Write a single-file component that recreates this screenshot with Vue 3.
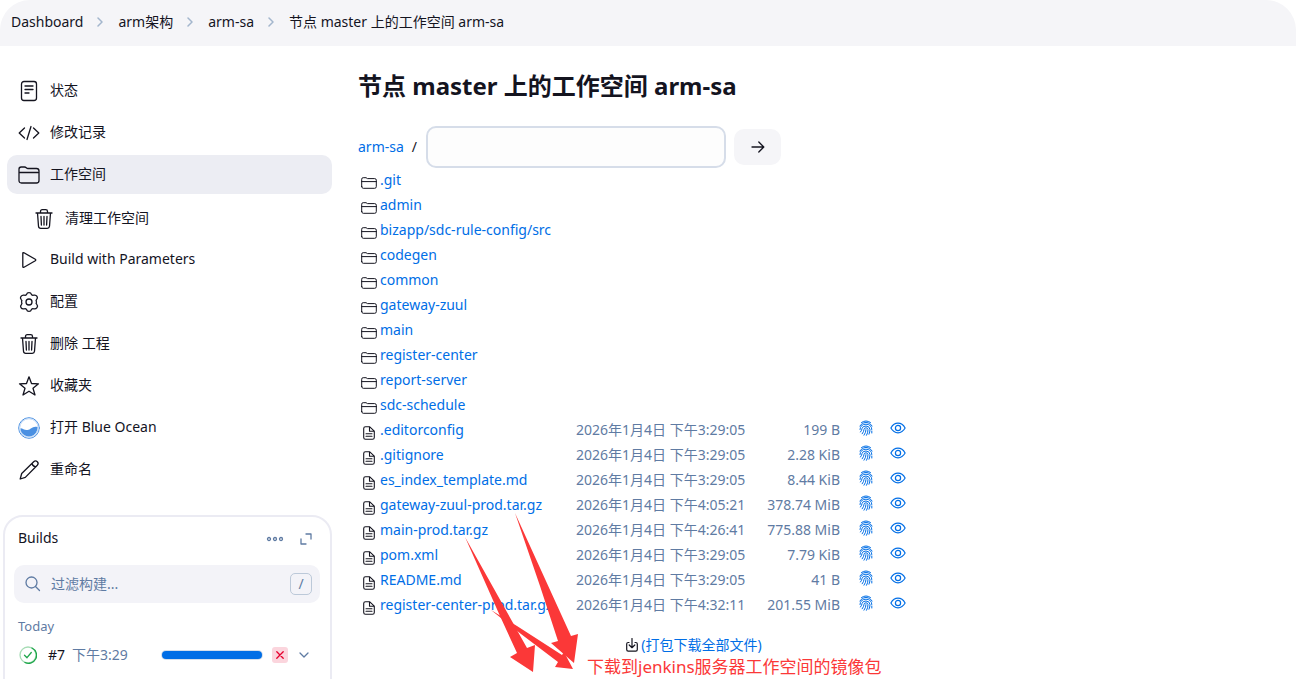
<script setup>
import { ref } from 'vue'

const crumbs = ['Dashboard', 'arm架构', 'arm-sa', '节点 master 上的工作空间 arm-sa']
const topTasks = [
  { icon: 'status', label: '状态' },
  { icon: 'code', label: '修改记录' },
  { icon: 'folder', label: '工作空间', active: true },
]
const tasks = [
  { icon: 'play', label: 'Build with Parameters' },
  { icon: 'gear', label: '配置' },
  { icon: 'trash', label: '删除 工程' },
  { icon: 'star', label: '收藏夹' },
  { icon: 'ocean', label: '打开 Blue Ocean' },
  { icon: 'pencil', label: '重命名' },
]
const folders = [
  '.git', 'admin', 'bizapp/sdc-rule-config/src', 'codegen', 'common', 'gateway-zuul',
  'main', 'register-center', 'report-server', 'sdc-schedule',
]
const files = [
  { name: '.editorconfig', time: '3:29:05', size: '199 B' },
  { name: '.gitignore', time: '3:29:05', size: '2.28 KiB' },
  { name: 'es_index_template.md', time: '3:29:05', size: '8.44 KiB' },
  { name: 'gateway-zuul-prod.tar.gz', time: '4:05:21', size: '378.74 MiB' },
  { name: 'main-prod.tar.gz', time: '4:26:41', size: '775.88 MiB' },
  { name: 'pom.xml', time: '3:29:05', size: '7.79 KiB' },
  { name: 'README.md', time: '3:29:05', size: '41 B' },
  { name: 'register-center-prod.tar.gz', time: '4:32:11', size: '201.55 MiB' },
]
const path = ref('')
const filter = ref('')
const progress = ref(100)
</script>

<template>
  <div class="page">
    <svg class="sprite" aria-hidden="true">
      <symbol id="status" viewBox="0 0 22 22"><rect x="3.500" y="1.500" width="15" height="19" rx="2.500" /><path d="M7 6h8M7 9.500h8M7 13h4" /></symbol>
      <symbol id="code" viewBox="0 0 22 22"><path d="M6.500 6 1.200 11l5.300 5M15.500 6l5.300 5-5.300 5M13 4.500 9 17.500" /></symbol>
      <symbol id="folder" viewBox="0 0 22 22"><path d="M1 16.500V5.200Q1 3 3.200 3H6.500Q7.500 3 8.300 3.700T10 4.500H18.500Q21 4.500 21 7V16.500Q21 19 18.500 19H3.500Q1 19 1 16.500ZM1 8.500H21" /></symbol>
      <symbol id="trash" viewBox="0 0 22 22"><path d="M3 5H19M7.500 5V3.500Q7.500 1.700 9.300 1.700H12.700Q14.500 1.700 14.500 3.500V5M4.500 5 5.500 18.300Q5.700 20.300 7.700 20.300H14.300Q16.300 20.300 16.500 18.300L17.500 5M8 8.500 8.400 17M11 8.500V17M14 8.500 13.600 17" /></symbol>
      <symbol id="play" viewBox="0 0 22 22"><path d="M4.800 4.500Q4.800 3.200 6 3.800L17.300 10.300Q18.200 11 17.300 11.700L6 18.200Q4.800 18.800 4.800 17.500Z" /></symbol>
      <symbol id="gear" viewBox="0 0 22 22"><circle cx="11" cy="11" r="3" /><path d="M8.600 3.300Q9 1.600 11 1.600T13.400 3.300Q14.200 4.600 15.700 4.200Q18 3.700 19 5.400T18.700 8.300Q17.500 9.500 18.500 11Q17.500 12.500 18.900 13.600Q20.200 15 19 16.600T15.700 17.800Q14.200 17.400 13.400 18.700Q13 20.400 11 20.400T8.600 18.700Q7.800 17.400 6.300 17.800Q4 18.300 3 16.600T3.300 13.700Q4.500 12.500 3.500 11Q4.500 9.500 3.100 8.400Q1.800 7 3 5.400T6.300 4.200Q7.800 4.600 8.600 3.300Z" /></symbol>
      <symbol id="star" viewBox="0 0 22 22"><path d="M11 1.800 13.500 8.500 20.500 8.800 15 13.200 17 20 11 16.200 5 20 7 13.200 1.500 8.800 8.500 8.500Z" /></symbol>
      <symbol id="ocean" viewBox="0 0 22 22"><circle cx="11" cy="11" r="10.300" fill="#fff" stroke="#4a90e2" stroke-width="1" /><circle cx="11" cy="11" r="9.300" fill="#fff" stroke="#bcd6f5" stroke-width="1" /><path d="M2.500 11.300C5 11.400 6.500 13.500 9.500 13C13 12.500 14.500 8.500 19.500 10C19.600 15.500 15.800 19.500 11 19.500C6.200 19.500 2.500 16 2.500 11.300Z" fill="#4a90e2" stroke="none" /></symbol>
      <symbol id="pencil" viewBox="0 0 22 22"><path d="M2.200 20 3.700 14.500 15.700 2.700Q17.500 1 19.300 2.700Q21 4.500 19.300 6.300L7.300 18.400ZM14 4.500Q15 7.800 17.700 7.900" /></symbol>
      <symbol id="smallfolder" viewBox="0 0 16 12"><path d="M.7 9.600V2.200Q.7.700 2.200.7H5L6.500 1.600H13.700Q15.300 1.600 15.300 3.200V9.600Q15.300 11.300 13.700 11.300H2.300Q.7 11.300.7 9.600ZM.7 4.600H15.300" /></symbol>
      <symbol id="file" viewBox="0 0 12 14"><path d="M.7 11.500V2.500Q.7.700 2.500.7H6.500L11.300 5.200V11.500Q11.300 13.300 9.500 13.300H2.500Q.7 13.300.7 11.500ZM6.500.7V5.200H11.300M3 7.700H9M3 10.300H9" /></symbol>
      <symbol id="finger" viewBox="0 0 14 16"><path d="M2.500 2.500Q7-.7 11.500 2.500M.8 6Q3 2.300 7 2.300T13.200 6M1 9.500Q1.300 4.200 7 4.200Q12.700 4.300 12.800 9.500M1.500 12Q3 10 3 8.500Q3.500 6 7 6T11 9.500Q11 12 10 14.200M3.200 13.800Q5 11.500 5 9.300Q5.300 7.800 7 7.800T9 9.500Q9 13 7.500 15.300M5 15.200Q7 12.500 7 9.600M12.800 11V13" /></symbol>
      <symbol id="eye" viewBox="0 0 16 12"><path d="M.9 6Q3.600 1.200 8 1.200T15.100 6Q12.400 10.800 8 10.800T.9 6Z" /><circle cx="8" cy="6" r="2.600" /></symbol>
      <symbol id="down" viewBox="0 0 12 14"><path d="M3 4.500H2.200Q.7 4.500.7 6V11.500Q.7 13.200 2.200 13.200H9.800Q11.300 13.200 11.300 11.500V6Q11.300 4.500 9.800 4.500H9M6 .5V9.500M3.200 7 6 9.700 8.800 7" /></symbol>
    </svg>

    <header class="top">
      <nav class="crumbs" aria-label="面包屑">
        <template v-for="(c, i) in crumbs" :key="c">
          <svg v-if="i" class="sep" viewBox="0 0 6 10"><path d="M1 1l4 4-4 4" /></svg>
          <a href="#">{{ c }}</a>
        </template>
      </nav>
    </header>

    <div class="body">
      <aside class="side">
        <nav class="tasks">
          <a v-for="t in topTasks" :key="t.label" href="#" class="task" :class="{ active: t.active }">
            <svg class="icon"><use :href="'#' + t.icon" /></svg><span>{{ t.label }}</span>
          </a>
        </nav>
        <nav class="tasks sub">
          <a href="#" class="task"><svg class="icon"><use href="#trash" /></svg><span>清理工作空间</span></a>
        </nav>
        <nav class="tasks">
          <a v-for="t in tasks" :key="t.label" href="#" class="task">
            <svg class="icon"><use :href="'#' + t.icon" /></svg><span>{{ t.label }}</span>
          </a>
        </nav>

        <section class="builds">
          <div class="builds-head">
            <h2>Builds</h2>
            <button type="button" aria-label="更多">
              <svg width="18" height="6" viewBox="0 0 18 6"><circle cx="3" cy="3" r="1.500" /><circle cx="9" cy="3" r="1.500" /><circle cx="15" cy="3" r="1.500" /></svg>
            </button>
            <button type="button" aria-label="展开">
              <svg width="12" height="12" viewBox="0 0 12 12"><path d="M6 1H11V6M1 6V11H6" /></svg>
            </button>
          </div>
          <label class="filter">
            <svg width="16" height="16" viewBox="0 0 16 16"><circle cx="6.500" cy="6.500" r="5.500" /><path d="M10.500 10.500 14.500 14.500" /></svg>
            <input v-model="filter" type="search" placeholder="过滤构建..." aria-label="过滤构建" />
            <kbd>/</kbd>
          </label>
          <h3>Today</h3>
          <div class="build">
            <svg class="ok" width="18" height="18" viewBox="0 0 18 18">
              <circle cx="9" cy="9" r="8" stroke="#a6dcb5" /><path d="M13 2A8 8 0 0 1 6 16.500" stroke="#1ea64b" /><path d="M5.500 9.300 8 11.700 12.300 6.500" stroke="#1ea64b" />
            </svg>
            <a href="#" class="num">#7</a>
            <span class="when">下午3:29</span>
            <span class="bar"><span :style="{ width: progress + '%' }"></span></span>
            <button type="button" class="stop" aria-label="停止">
              <svg width="8" height="8" viewBox="0 0 8 8"><path d="M.8.800 7.200 7.200M7.200.800.800 7.200" /></svg>
            </button>
            <button type="button" class="more" aria-label="菜单">
              <svg width="10" height="6" viewBox="0 0 10 6"><path d="M1 1l4 4 4-4" /></svg>
            </button>
          </div>
        </section>
      </aside>

      <main class="main">
        <h1>节点 master 上的工作空间 arm-sa</h1>
        <form class="path" @submit.prevent>
          <a href="#">arm-sa</a><span>/</span>
          <input v-model="path" type="text" aria-label="路径" />
          <button type="submit" aria-label="前往">
            <svg width="14" height="12" viewBox="0 0 14 12"><path d="M1 6H12.500M7.800 1 12.800 6 7.800 11" /></svg>
          </button>
        </form>
        <table class="files">
          <colgroup><col class="c-icon" /><col class="c-name" /><col class="c-date" /><col class="c-size" /><col class="c-act" /><col class="c-act" /></colgroup>
          <tbody>
            <tr v-for="f in folders" :key="f">
              <td class="type"><svg class="dir"><use href="#smallfolder" /></svg></td>
              <td colspan="5"><a href="#">{{ f }}</a></td>
            </tr>
            <tr v-for="f in files" :key="f.name">
              <td class="type"><svg class="doc"><use href="#file" /></svg></td>
              <td><a href="#">{{ f.name }}</a></td>
              <td class="date">2026年1月4日 下午{{ f.time }}</td>
              <td class="size">{{ f.size }}</td>
              <td class="act"><a href="#" aria-label="指纹"><svg class="finger"><use href="#finger" /></svg></a></td>
              <td class="act"><a href="#" aria-label="查看"><svg class="eye"><use href="#eye" /></svg></a></td>
            </tr>
          </tbody>
        </table>
        <div class="zip">
          <svg class="down"><use href="#down" /></svg><a href="#">(打包下载全部文件)</a>
        </div>
      </main>
    </div>

    <svg class="arrows" width="120" height="170" viewBox="460 507 120 170" aria-hidden="true">
      <path d="M491 610 517 626 562 655 564 652 573 669 555 667 558 662 521 634Z" />
      <path d="M515 513 571 636 578 634 574 663 551 643 558 641 540 586Z" />
      <path d="M465 537 527 648 535 645 533 672 510 657 517 653 500 616Z" />
    </svg>
    <p class="note">下载到jenkins服务器工作空间的镜像包</p>
  </div>
</template>

<style>
body { background: #fff; }
</style>

<style scoped>
.page {
  position: relative;
  height: 100vh;
  overflow: hidden;
  color: #14141f;
  font: 14px/20px "Noto Sans", "Noto Sans CJK SC", sans-serif;
}
*, *::before, *::after { box-sizing: border-box; }
a { color: inherit; text-decoration: none; }
button { border: 0; padding: 0; background: none; color: inherit; font: inherit; display: grid; place-items: center; }
svg { fill: none; stroke: currentColor; stroke-width: 1.3; stroke-linecap: round; stroke-linejoin: round; flex: none; }
.sprite { position: absolute; width: 0; height: 0; }

.top { height: 46px; padding: 0 11px; background: #f5f5f8; border-radius: 30px 30px 0 0; }
.crumbs { display: flex; align-items: center; height: 44px; white-space: nowrap; }
.sep { width: 6px; height: 10px; margin: 0 15px 0 14px; color: #a3b6cd; stroke-width: 1.5; }

.body { display: flex; gap: 26px; padding-left: 7px; }
.side { width: 325px; flex: none; padding-top: 25px; }
.tasks { display: flex; flex-direction: column; gap: 3px; }
.task { display: flex; align-items: center; gap: 10px; height: 39px; padding-left: 11px; border-radius: 10px; }
.task span { padding-bottom: 2px; }
.task.active { background: #ecedf3; }
.icon { width: 22px; height: 22px; }
.sub { padding: 5px 0 2px 15px; }

.builds { margin: 26px 0 0 -4px; padding: 8px 10px 8px 9px; border: 2px solid #ebebf3; border-radius: 20px; height: 240px; }
.builds-head { display: flex; align-items: center; gap: 16px; height: 28px; padding: 0 8px 0 4px; color: #5f7ba3; }
.builds-head h2 { margin: 0 auto 2px 0; color: #14141f; font-size: 14px; line-height: 20px; font-weight: 400; }
.filter { display: flex; align-items: center; margin-top: 12px; height: 38px; padding: 0 8px 0 11px; gap: 10px; border-radius: 10px; background: #f3f3f8; color: #5f7ba3; }
.filter input { flex: 1; min-width: 0; border: 0; padding: 0; outline: 0; background: none; font: inherit; color: inherit; }
.filter input::placeholder { color: #5f7ba3; opacity: 1; }
kbd { width: 22px; height: 22px; border: 1px solid #bcc9d9; border-radius: 5px; font: inherit; line-height: 20px; text-align: center; }
.builds h3 { margin: 13px 0 0 4px; font-size: 13px; line-height: 20px; font-weight: 400; color: #5f7ba3; }
.build { display: flex; align-items: center; height: 38px; padding: 0 11px 0 5px; }
.num { margin-left: 11px; }
.when { margin-left: 7px; color: #5f7ba3; }
.bar { width: 102px; height: 10px; margin-left: auto; padding: 1px; border-radius: 5px; background: #d5dfeb; }
.bar span { display: block; height: 8px; border-radius: 4px; background: #006ee6; }
.stop { width: 16px; height: 16px; margin-left: 9px; border-radius: 3px; background: #fbd5dd; color: #e6002e; }
.more { width: 10px; height: 16px; margin-left: 11px; color: #5f7ba3; }

.main { flex: 1; min-width: 0; padding-top: 24px; }
h1 { margin: 0; font-size: 24px; line-height: 32px; font-weight: 700; }
.path { display: flex; align-items: center; margin-top: 24px; }
.path a, .files a, .zip a { color: #006ee6; }
.path span { margin: 0 9px 0 8px; }
.path input { width: 300px; height: 42px; padding: 0 10px; border: 2px solid #d6dde9; border-radius: 10px; background: #fdfdfd; font: inherit; }
.path button { width: 47px; height: 36px; margin-left: 8px; border-radius: 10px; background: #f5f5f8; }
.files { width: 556px; table-layout: fixed; border-collapse: collapse; }
.files td { height: 25px; padding: 0 0 2px; white-space: nowrap; vertical-align: middle; }
.c-icon { width: 22px; }
.c-name { width: 196px; }
.c-date { width: 180px; }
.c-size { width: 94px; }
.c-act { width: 32px; }
.files svg { display: block; margin: 0 auto; }
.files .type { padding: 5px 0 0; }
.dir { width: 16px; height: 12px; stroke-width: 1; }
.doc { width: 12px; height: 14px; stroke-width: 1.1; }
.date, .size { color: #5f7ba3; }
.files .size { text-align: right; padding-right: 10px; }
.files .act { padding-bottom: 5px; }
.finger { width: 14px; height: 16px; stroke-width: 1; }
.eye { width: 16px; height: 12px; stroke-width: 1.2; }
.zip { display: flex; align-items: center; justify-content: center; gap: 3px; width: 672px; margin-top: 17px; }
.down { width: 12px; height: 14px; stroke-width: 1.2; }

.arrows { position: absolute; left: 460px; top: 507px; fill: #fb3838; stroke: none; }
.note { position: absolute; left: 587px; top: 655px; margin: 0; color: #fb3838; font-size: 17px; line-height: 24px; white-space: nowrap; }
</style>
